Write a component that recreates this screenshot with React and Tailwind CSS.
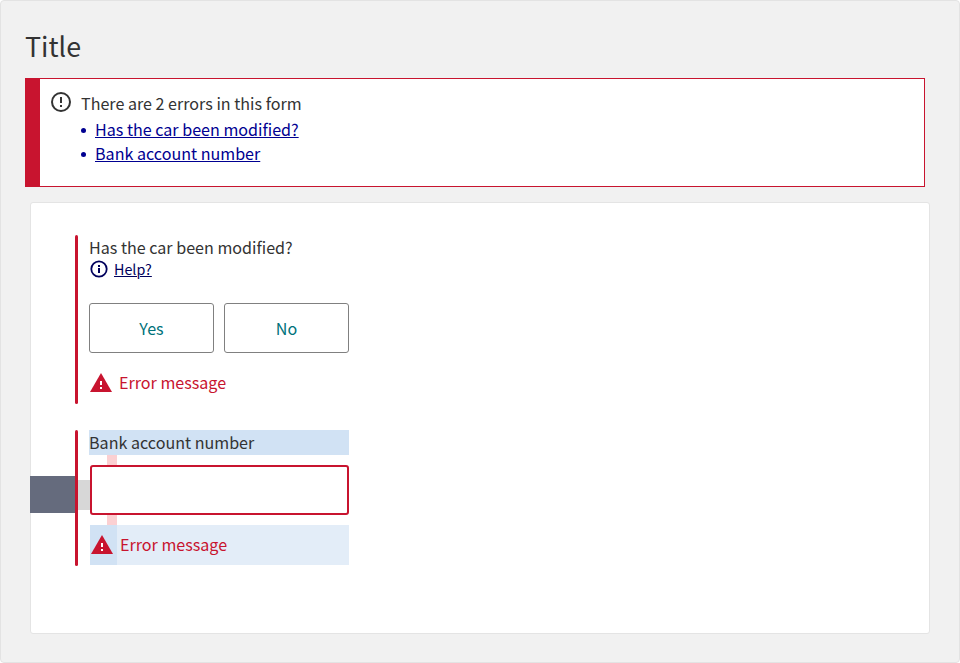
function WarningTriangle() {
  return (
    <svg className="block shrink-0" width="22" height="19" viewBox="0 0 22 19">
      <path d="M11 0L22 19H0z" fill="#c8142f" />
      <path d="M10 8h2v4h-2zM10 14h2v2h-2z" fill="#fff" />
    </svg>
  );
}

function AlertCircle() {
  return (
    <svg className="block shrink-0" width="20" height="20" viewBox="0 0 20 20">
      <circle cx="10" cy="10" r="9" fill="none" stroke="#333" strokeWidth="2" />
      <path d="M9 5h2v6h-2zM9 13h2v2h-2z" fill="#333" />
    </svg>
  );
}

function InfoCircle() {
  return (
    <svg className="block shrink-0" width="18" height="18" viewBox="0 0 18 18">
      <circle cx="9" cy="9" r="7.7" fill="none" stroke="#00005c" strokeWidth="1.8" />
      <path d="M8 5h2v2h-2zM8 8h2v5h-2z" fill="#00005c" />
    </svg>
  );
}

function ErrorSummary() {
  const links = ["Has the car been modified?", "Bank account number"];
  return (
    <section className="flex h-[109px] w-[900px] border border-l-[15px] border-[#c8142f] bg-white pl-[11px] pt-[12px]">
      <div className="pt-px">
        <AlertCircle />
      </div>
      <div className="ml-[10px]">
        <p className="h-[26px] text-[16.1px] leading-[24px]">There are 2 errors in this form</p>
        <ul className="text-[#000091]">
          {links.map((link) => (
            <li key={link} className="flex h-6 items-center">
              <span className="mr-[9px] mt-[3px] size-[5px] rounded-full bg-[#000091]" />
              <a className="text-[16.1px] leading-[24px] underline decoration-1 underline-offset-1">{link}</a>
            </li>
          ))}
        </ul>
      </div>
    </section>
  );
}

function ChoiceButton({ children }) {
  return (
    <button className="h-[50px] w-[125px] rounded-[3px] border border-[#808080] bg-white text-[16.1px] leading-[24px] text-[#00727a]">
      {children}
    </button>
  );
}

export default function App() {
  return (
    <main className="h-[663px] w-[960px] rounded-[4px] border border-[#e3e3e3] bg-[#f1f1f1] pl-[24px] pt-[25px] font-['Noto_Sans_CJK_SC',sans-serif] text-[#333]">
      <h1 className="h-[52px] text-[26.8px] leading-[40px]">Title</h1>
      <ErrorSummary />
      <section className="ml-[5px] mt-[15px] h-[432px] w-[900px] rounded-[3px] border border-[#e4e4e4] bg-white pt-[32px]">
        <div className="ml-[44px] flex h-[169px]">
          <div className="w-[3px] rounded-full bg-[#c8142f]" />
          <div className="ml-[11px]">
            <p className="h-[25px] text-[16.1px] leading-[25px]">Has the car been modified?</p>
            <div className="flex h-[18px] items-center gap-[6px] pl-px text-[#00005c]">
              <InfoCircle />
              <a className="text-[14.3px] leading-[18px] underline decoration-1 underline-offset-1">Help?</a>
            </div>
            <div className="mt-[25px] flex gap-[10px]">
              <ChoiceButton>Yes</ChoiceButton>
              <ChoiceButton>No</ChoiceButton>
            </div>
            <div className="mt-[20px] flex items-center gap-[7px] pl-px text-[#c8142f]">
              <WarningTriangle />
              <span className="text-[16.1px] leading-[19px]">Error message</span>
            </div>
          </div>
        </div>
        <div className="-ml-px mt-[26px] flex h-[136px]">
          <div className="mt-[46px] h-[37px] w-[45px] bg-[#656b7d]" />
          <div className="w-[3px] rounded-full bg-[#c8142f]" />
          <div className="mt-[50px] h-[30px] w-[12px] bg-[#d7d7d7]" />
          <div className="w-[259px]">
            <label className="-ml-px block h-[25px] bg-[#d1e2f4] text-[16.1px] leading-[25px]">Bank account number</label>
            <div className="ml-[17px] h-[10px] w-[10px] bg-[#fbd0d2]" />
            <input className="block h-[50px] w-full rounded-[3px] border-2 border-[#c8142f] bg-white" />
            <div className="ml-[17px] h-[10px] w-[10px] bg-[#fbd0d2]" />
            <div className="flex h-[40px] bg-[#e3edf8] text-[#c8142f]">
              <div className="h-full w-[27px] bg-[#d1e2f4] pl-px pt-[10px]">
                <WarningTriangle />
              </div>
              <span className="ml-[3px] text-[16.1px] leading-[38px]">Error message</span>
            </div>
          </div>
        </div>
      </section>
    </main>
  );
}
